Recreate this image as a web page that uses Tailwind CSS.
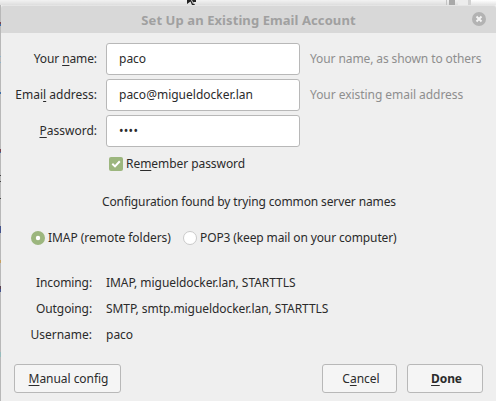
<!DOCTYPE html>
<html lang="en">
<head>
<meta charset="utf-8">
<title>Set Up an Existing Email Account</title>
<script src="https://cdn.jsdelivr.net/npm/@tailwindcss/browser@4"></script>
</head>
<body class="w-[496px] h-[401px] overflow-hidden bg-[#efefef] font-['Noto_Sans',sans-serif] text-[12px] leading-4 text-[#2b2b2b]">
<div class="relative flex h-[401px] w-[496px] flex-col">
  <!-- window behind the dialog -->
  <div class="flex h-[5px] shrink-0 bg-linear-to-b from-[#f2f2f2] to-[#dedede]">
    <svg class="ml-[187px] h-[5px] w-[12px]" viewBox="0 0 12 5"><path d="M0 0H9V2H6L8 5H5L3.5 1.5L0 4Z" fill="#222"/><path d="M4.5 0L6.5 4" stroke="#fff" stroke-width=".8"/></svg>
    <div class="ml-[247px] flex h-[5px] w-[50px]">
      <div class="h-full w-px bg-[#c4c4c4]"></div>
      <div class="ml-[2px] h-full w-[6px] bg-[#a9a9a9]"></div>
      <div class="ml-[3px] h-full w-[10px] bg-[#ececec]"></div>
      <div class="h-full w-[3px] bg-[#d2d2d2]"></div>
      <div class="h-full grow bg-linear-to-b from-white to-[#e4e4e4]"></div>
    </div>
  </div>

  <div class="flex grow">
    <svg class="h-[396px] w-px shrink-0" viewBox="0 0 1 396" preserveAspectRatio="none">
      <path d="M0 0H1V396H0Z" fill="#b8b8b8"/>
      <path d="M0 17H1V19H0ZM0 144H1V147H0Z" fill="#7a4550"/>
      <path d="M0 19H1V21H0ZM0 87H1V89H0ZM0 147H1V148H0Z" fill="#3f6ea5"/>
      <path d="M0 51H1V52H0ZM0 57H1V58H0Z" fill="#8db4cc"/>
      <path d="M0 170H1V171H0ZM0 176H1V177H0ZM0 193H1V194H0Z" fill="#444"/>
      <path d="M0 221H1V228H0ZM0 284H1V287H0Z" fill="#43538c"/>
      <path d="M0 255H1V258H0Z" fill="#c7a060"/>
      <path d="M0 281H1V284H0Z" fill="#5a4050"/>
      <path d="M0 347H1V352H0Z" fill="#96bcbc"/>
    </svg>

    <div class="flex w-[495px] flex-col bg-[#efefef]">
      <header class="relative flex h-7 items-center justify-center rounded-t-[3px] border-t border-[#e5e5e5] bg-[#d8d8d8] text-[13px] font-bold tracking-[0.08px] text-[#a0a0a0]">
        <span class="whitespace-nowrap">Set Up an Existing Email Account</span>
        <svg class="absolute left-[471px] top-[6px] size-[14px]" viewBox="0 0 14 14"><circle cx="7" cy="7" r="7" fill="#b3b3b3"/><path d="M4.5 4.5L9.5 9.5M9.5 4.5L4.5 9.5" stroke="#f4f4f4" stroke-width="2"/></svg>
      </header>

      <div class="mt-[10px] flex flex-col gap-1">
        <div class="flex h-8 items-center">
          <label class="w-[96px] text-right tracking-[-0.1px]">Your <u class="underline-offset-2">n</u>ame:</label>
          <div class="ml-[9px] flex h-8 w-[194px] items-center rounded-[3px] border border-[#b8b8b8] bg-white pl-3">paco</div>
          <span class="ml-[10px] tracking-[-0.1px] text-[#8e8e8e]">Your name, as shown to others</span>
        </div>
        <div class="flex h-8 items-center">
          <label class="w-[96px] whitespace-nowrap text-right">Emai<u class="underline-offset-2">l</u> address:</label>
          <div class="ml-[9px] flex h-8 w-[194px] items-center rounded-[3px] border border-[#b8b8b8] bg-white pl-3">paco@migueldocker.lan</div>
          <span class="ml-[10px] tracking-[-0.05px] text-[#8e8e8e]">Your existing email address</span>
        </div>
        <div class="flex h-8 items-center">
          <label class="w-[96px] text-right"><u class="underline-offset-2">P</u>assword:</label>
          <div class="ml-[9px] flex h-8 w-[194px] items-center rounded-[3px] border border-[#b8b8b8] bg-white pl-3 tracking-[0.3px]">••••</div>
        </div>
      </div>

      <div class="ml-[108px] mt-[9px] flex h-4 items-center">
        <svg class="size-[14px]" viewBox="0 0 14 14"><rect width="14" height="14" rx="2" fill="#9cb67e"/><path d="M3.3 6.8L6 9.4L10.8 4.3" fill="none" stroke="#fff" stroke-width="2"/></svg>
        <span class="ml-[3px] tracking-[-0.06px]">Re<u class="underline-offset-2">m</u>ember password</span>
      </div>

      <p class="mt-[22px] pl-[101px] tracking-[-0.125px]">Configuration found by trying common server names</p>

      <div class="ml-[30px] mt-5 flex h-4 items-center">
        <svg class="size-[14px]" viewBox="0 0 14 14"><circle cx="7" cy="7" r="7" fill="#9cb67e"/><circle cx="7" cy="7" r="2.2" fill="#fff"/></svg>
        <span class="ml-[3px] w-[135px] whitespace-nowrap tracking-[-0.04px]">IMAP (remote folders)</span>
        <svg class="size-[14px]" viewBox="0 0 14 14"><circle cx="7" cy="7" r="6.5" fill="#fff" stroke="#c9c9c9"/></svg>
        <span class="ml-[3px] whitespace-nowrap tracking-[-0.12px]">POP3 (keep mail on your computer)</span>
      </div>

      <div class="mt-[29px] grid grid-cols-[91px_1fr] gap-x-[14px] gap-y-[10px]">
        <span class="text-right tracking-[-0.1px]">Incoming:</span><span class="tracking-[-0.05px]">IMAP, migueldocker.lan, STARTTLS</span>
        <span class="text-right tracking-[-0.1px]">Outgoing:</span><span class="tracking-[-0.06px]">SMTP, smtp.migueldocker.lan, STARTTLS</span>
        <span class="text-right">Username:</span><span>paco</span>
      </div>

      <footer class="ml-[13px] mt-[21px] flex h-[29px]">
        <button class="w-[107px] rounded-[3px] border border-[#b8b8b8] bg-[#f5f5f5] pl-[2px] tracking-[-0.05px]"><u class="underline-offset-2">M</u>anual config</button>
        <button class="ml-[201px] w-[75px] rounded-[3px] border border-[#b8b8b8] bg-[#f5f5f5] pl-[3px]">C<u class="underline-offset-2">a</u>ncel</button>
        <button class="ml-[10px] w-[76px] rounded-[3px] border border-[#b8b8b8] bg-[#f5f5f5] pl-[3px] font-bold tracking-[-0.1px]"><u class="underline-offset-2">D</u>one</button>
      </footer>
    </div>
  </div>
</div>
</body>
</html>
